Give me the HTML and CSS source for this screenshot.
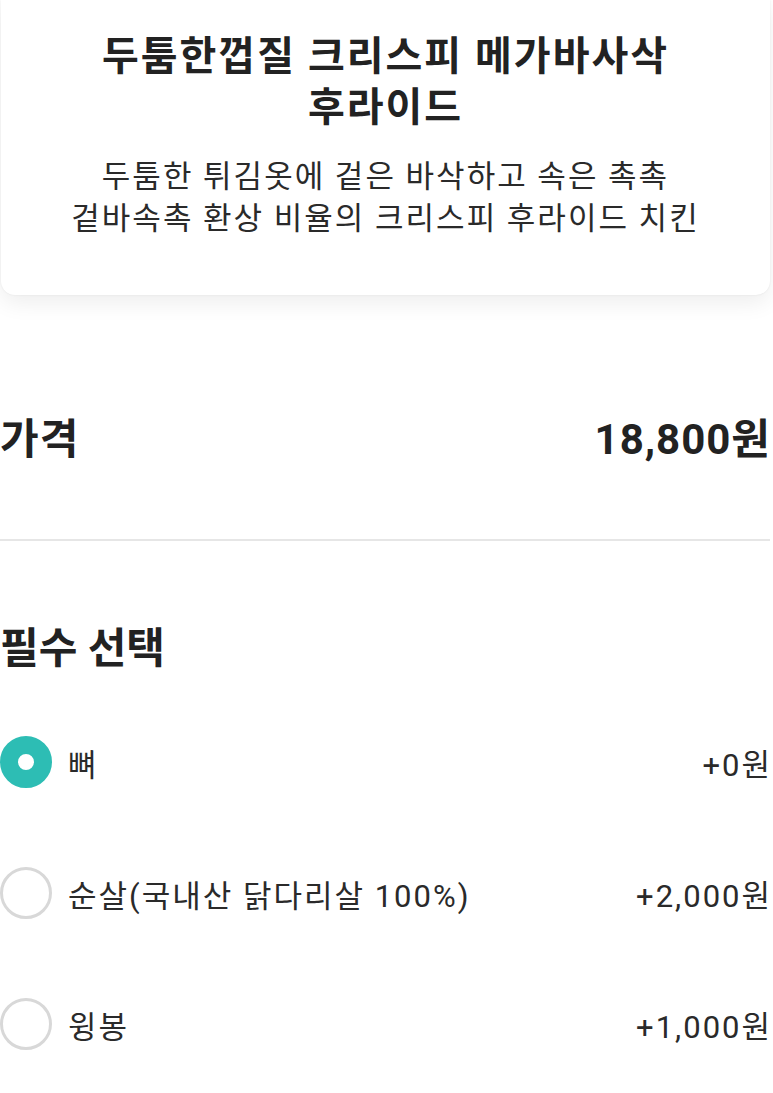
FILE: index.html
```html
<!DOCTYPE html>
<html lang="ko">
<head>
  <meta charset="UTF-8" />
  <meta name="viewport" content="width=device-width, initial-scale=1.0"/>
  <title>메뉴 선택</title>
  <link rel="stylesheet" href="styles.css">
</head>
<body>

  <div class="menu-card">
    <h1>두툼한껍질 크리스피 메가바사삭<br>후라이드</h1>
    <p>두툼한 튀김옷에 겉은 바삭하고 속은 촉촉<br>겉바속촉 환상 비율의 크리스피 후라이드 치킨</p>
  </div>

  <div class="price-row">
    <span>가격</span>
    <span class="price">18,800원</span>
  </div>

  <div class="options">
    <h2>필수 선택</h2>

    <label class="option">
      <span class="radio checked"></span>
      <span class="option-name">뼈</span>
      <span class="option-price">+0원</span>
    </label>

    <label class="option">
      <span class="radio"></span>
      <span class="option-name">순살(국내산 닭다리살 100%)</span>
      <span class="option-price">+2,000원</span>
    </label>

    <label class="option">
      <span class="radio"></span>
      <span class="option-name">윙봉</span>
      <span class="option-price">+1,000원</span>
    </label>
  </div>

</body>
</html>
```

FILE: styles.css
```css
:root {
  --text: #222;
  --teal: #2dbdb4;
  --line: #e6e6e6;
}

body {
  font-family: Roboto, "Noto Sans CJK KR", sans-serif;
  color: var(--text);
  background-color: #fff;
  margin: 0;
  padding: 0 3px 0 0;
}

.menu-card {
  margin: 0 0 0 1px;
  padding: 31px 20px 55px;
  background-color: #fff;
  border-radius: 0 0 14px 14px;
  box-shadow: 0 8px 22px rgba(0, 0, 0, 0.07), 0 0 2px rgba(0, 0, 0, 0.08);
  text-align: center;
}

.menu-card h1 {
  margin: 0;
  font-size: 40px;
  line-height: 51px;
  font-weight: 700;
  letter-spacing: 2px;
}

.menu-card p {
  margin: 23px 0 0;
  font-size: 31px;
  line-height: 42px;
  letter-spacing: 2px;
  color: #2a2a2a;
}

.price-row {
  display: flex;
  justify-content: space-between;
  align-items: center;
  padding: 124px 0 78px;
  font-size: 42px;
  line-height: 42px;
  font-weight: 700;
  letter-spacing: 1px;
  border-bottom: 2px solid var(--line);
}

.price {
  margin-right: -1px;
}

.options {
  display: flex;
  flex-direction: column;
  gap: 77px;
}

.options h2 {
  margin: 82px 0 0;
  font-size: 42px;
  line-height: 52px;
  font-weight: 700;
}

.option {
  display: flex;
  align-items: center;
  height: 54px;
  font-size: 31px;
  letter-spacing: 2px;
  color: #2a2a2a;
}

.options h2 + .option {
  margin-top: -17px;
}

.radio {
  box-sizing: border-box;
  width: 52px;
  height: 52px;
  margin-right: 16px;
  border-radius: 50%;
  border: 3px solid #d8d8d8;
  flex-shrink: 0;
}

.radio.checked {
  border: 18px solid var(--teal);
  background-color: #fff;
}

.option-name {
  flex: 1;
}

.option-price {
  margin-right: -2px;
  text-align: right;
}
```
